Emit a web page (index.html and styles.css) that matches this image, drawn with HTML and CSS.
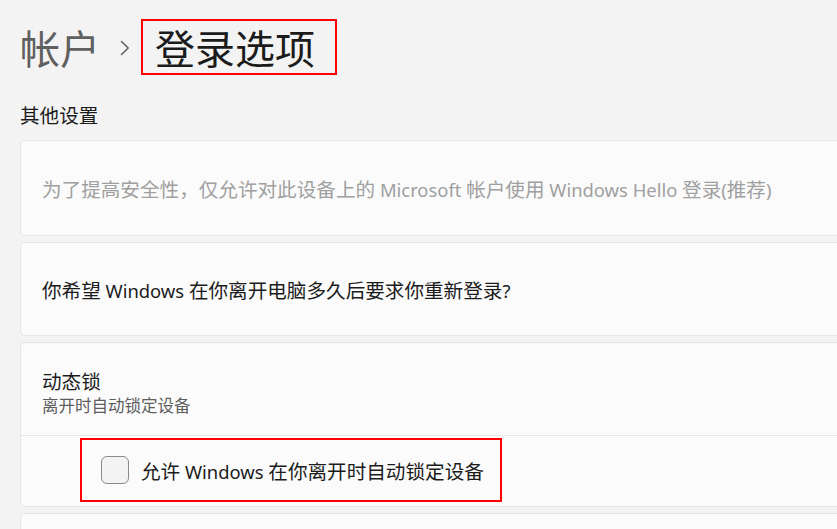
FILE: index.html
```html
<!DOCTYPE html>
<html lang="zh-CN">
<head>
<meta charset="utf-8">
<title>登录选项</title>
<link rel="stylesheet" href="styles.css">
</head>
<body>
<div class="page">
  <div class="breadcrumb">
    <span class="crumb-parent">帐户</span>
    <svg class="chevron" width="10" height="16" viewBox="0 0 10 16"><path d="M1.5 1.5 L8.2 8 L1.5 14.5" fill="none" stroke="#5f5f5f" stroke-width="1.6" stroke-linecap="round" stroke-linejoin="round"/></svg>
    <span class="crumb-current">登录选项</span>
  </div>
  <h2 class="section-title">其他设置</h2>
  <div class="card card-one">
    <span class="text-disabled">为了提高安全性，仅允许对此设备上的<span class="lt"> Microsoft </span>帐户使用<span class="lt"> Windows Hello </span>登录<span class="lt">(</span>推荐<span class="lt">)</span></span>
  </div>
  <div class="card card-two">
    <span class="text-main">你希望<span class="lt"> Windows </span>在你离开电脑多久后要求你重新登录<span class="lt">?</span></span>
  </div>
  <div class="card card-three">
    <div class="card-header">
      <div class="text-main title-line">动态锁</div>
      <div class="text-sub">离开时自动锁定设备</div>
    </div>
    <div class="card-body">
      <label class="check-wrap">
        <span class="checkbox"></span>
        <span class="text-main">允许<span class="lt"> Windows </span>在你离开时自动锁定设备</span>
      </label>
    </div>
  </div>
  <div class="card card-four"></div>
</div>
</body>
</html>
```

FILE: styles.css
```css
html, body {
  margin: 0;
  padding: 0;
  background: #f3f3f3;
  overflow: hidden;
}
body {
  width: 837px;
  height: 529px;
  font-family: "Noto Sans CJK SC", "Noto Sans", sans-serif;
  color: #1b1b1b;
}
.page {
  padding-left: 20px;
  height: 529px;
  overflow: hidden;
}
.lt {
  font-family: "Noto Sans", "Noto Sans CJK SC", sans-serif;
  font-size: 18.4px;
}
.breadcrumb {
  display: flex;
  align-items: center;
  margin-top: 19px;
  height: 56px;
}
.crumb-parent {
  font-size: 40px;
  line-height: 52px;
  color: #5f5f5f;
}
.chevron {
  margin-left: 20px;
  margin-right: 11px;
  margin-top: 2px;
}
.crumb-current {
  font-size: 40px;
  line-height: 52px;
  color: #1b1b1b;
  border: 2px solid #f00;
  padding: 0 20px 0 12px;
}
.section-title {
  margin: 26px 0 11px 0;
  font-size: 19.6px;
  font-weight: normal;
  line-height: 28px;
  color: #1b1b1b;
}
.card {
  box-sizing: border-box;
  background: #fbfbfb;
  border: 1px solid #e5e5e5;
  border-right: none;
  border-radius: 5px 0 0 5px;
  margin-bottom: 6px;
}
.card-one, .card-two {
  display: flex;
  align-items: center;
  padding-left: 21px;
}
.card-one { height: 96px; }
.card-two { height: 94px; }
.text-disabled {
  font-size: 19.6px;
  color: #a0a0a0;
}
.text-main {
  font-size: 19.6px;
  color: #1b1b1b;
}
.card-header {
  padding: 25px 0 19px 21px;
  border-bottom: 1px solid #e5e5e5;
}
.title-line {
  line-height: 26px;
}
.text-sub {
  font-size: 16.5px;
  line-height: 22px;
  color: #5d5d5d;
}
.card-body {
  height: 70px;
  display: flex;
  align-items: center;
  padding-left: 59px;
}
.check-wrap {
  box-sizing: border-box;
  display: flex;
  align-items: center;
  gap: 12px;
  height: 64px;
  width: 422px;
  border: 2px solid #f00;
  padding-left: 19px;
  margin-top: -2px;
}
.checkbox {
  box-sizing: border-box;
  width: 28px;
  height: 28px;
  border: 1px solid #8a8a8a;
  border-radius: 6px;
  background: #f3f3f3;
  flex: none;
}
.card-four {
  height: 16px;
  margin-bottom: 0;
  border-bottom: none;
  border-radius: 5px 0 0 0;
}
```
